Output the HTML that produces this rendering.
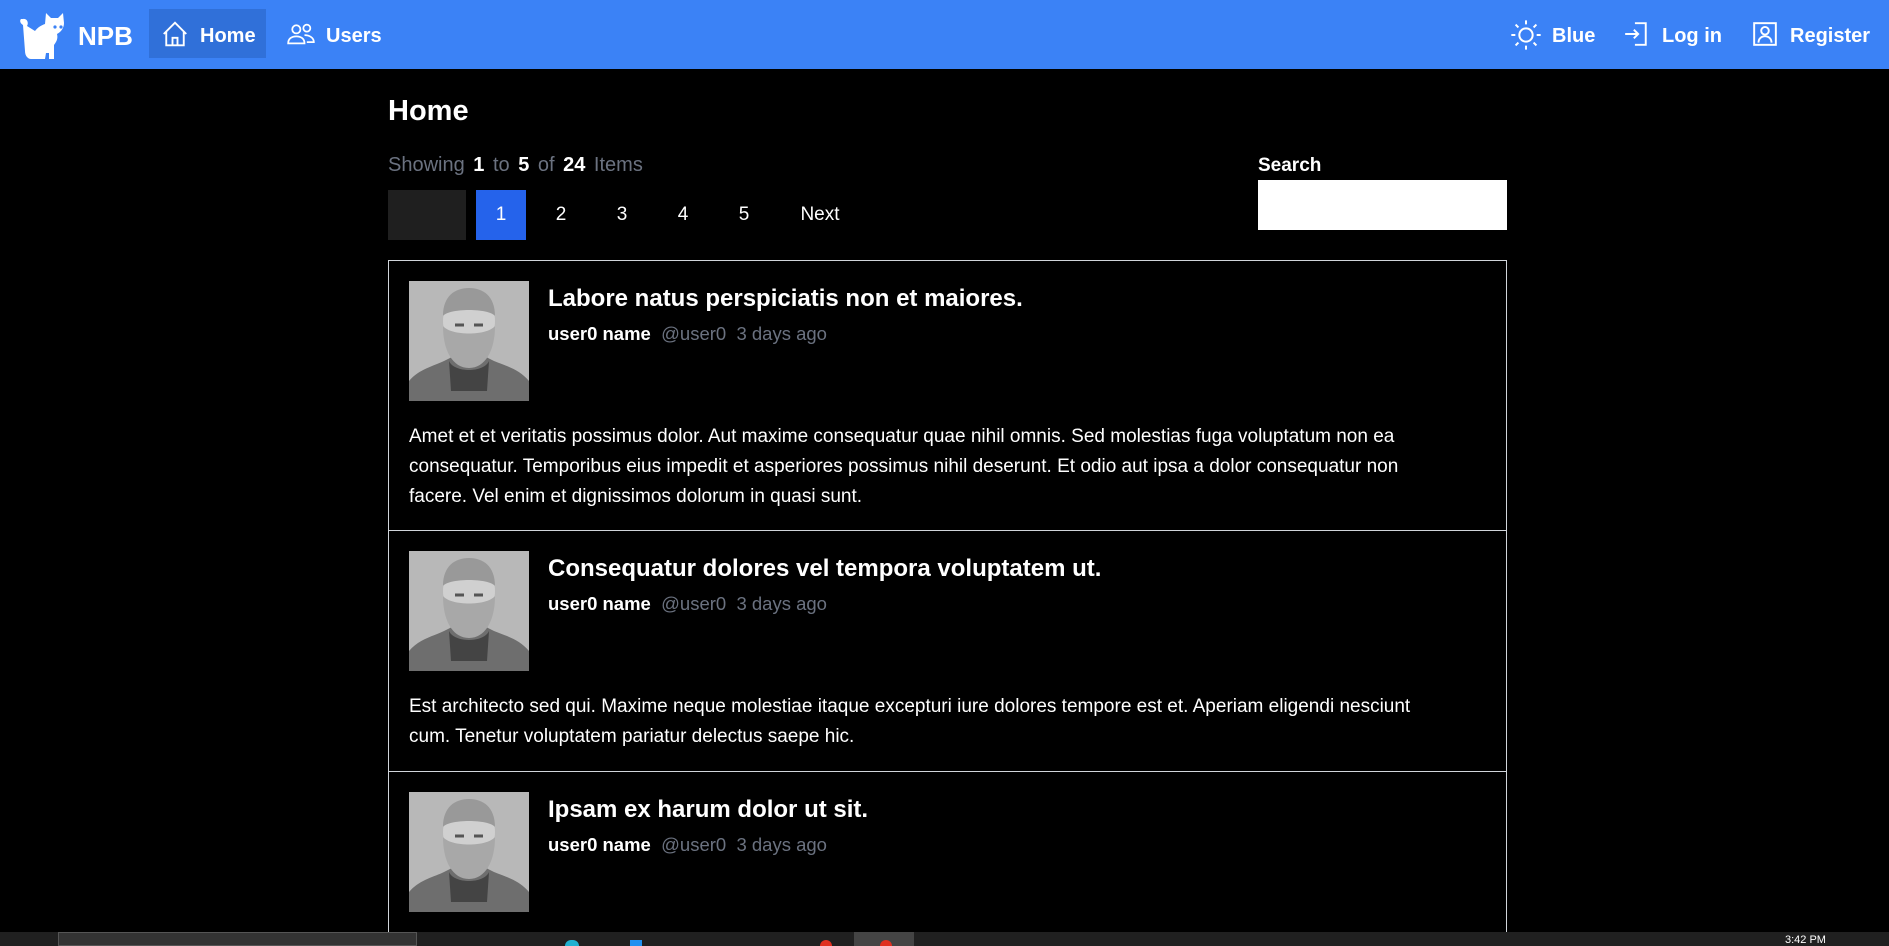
<!DOCTYPE html>
<html style="overflow:hidden;height:946px"><head><meta charset="utf-8"><style>
*{margin:0;padding:0;box-sizing:border-box}
body{width:1889px;height:946px;background:#000;color:#fff;font-family:"Liberation Sans",sans-serif;overflow:hidden;position:relative}
.nav{position:absolute;left:0;top:0;width:1889px;height:69px;background:#3b82f6}
.a{position:absolute;white-space:nowrap}
.nt{font-weight:bold;font-size:20px;top:25px}
.hl{position:absolute;left:149px;top:9px;width:117px;height:49px;background:#3070d9}
svg.i{position:absolute}
.gray{color:#6b7280}
.pg{position:absolute;top:190px;height:50px;font-size:19px;line-height:50px;text-align:center}
.card{position:absolute;left:388px;width:1119px;border:1px solid #d1d5db;border-bottom:none}
.av{position:absolute;left:20px;top:20px;width:120px;height:120px}
.tt{position:absolute;left:159px;top:24px;font-size:24px;font-weight:bold;white-space:nowrap}
.mt{position:absolute;left:159px;top:62px;font-size:18.5px;white-space:nowrap}
.bd{position:absolute;left:20px;top:161px;width:1045px;font-size:19px;line-height:30px}
</style></head><body>
<div class="nav">
<div class="hl"></div>
<svg class="i" style="left:17px;top:11px" width="52" height="50" viewBox="0 0 52 50"><path fill="#fff" d="M4 8c-2 2 0 5 2 6l2 26c0 5 3 8 6 8h14l1-6 3 0 0 6h5l0-14c3-4 4-7 3-11 4-2 7-6 7-11l-1-10-5 5h-7l-5-5-1 11c-3 1-7 3-10 7L10 15c2-3 0-8-4-7z"/><circle cx="38" cy="16" r="1.6" fill="#3b82f6"/><circle cx="44" cy="16" r="1.6" fill="#3b82f6"/></svg>
<div class="a" style="left:78px;top:21px;font-size:26px;font-weight:bold">NPB</div>
<svg class="i" style="left:160px;top:19px" width="30" height="30" viewBox="0 0 24 24" fill="none" stroke="#fff" stroke-width="1.5"><path d="M3 12 12 3l9 9M5 10v11h14V10M10 21v-6h4v6"/></svg>
<div class="a nt" style="left:200px">Home</div>
<svg class="i" style="left:286px;top:20px" width="30" height="28" viewBox="0 0 24 24" fill="none" stroke="#fff" stroke-width="1.5"><circle cx="8" cy="8" r="3.5"/><circle cx="17" cy="7" r="3"/><path d="M1 20c0-4 3-6 7-6s7 2 7 6zM15 13c4 0 8 2 8 6h-6"/></svg>
<div class="a nt" style="left:326px">Users</div>
<svg class="i" style="left:1510px;top:19px" width="32" height="32" viewBox="0 0 24 24" fill="none" stroke="#fff" stroke-width="1.5"><circle cx="12" cy="12" r="5"/><path d="M12 1v3M12 20v3M1 12h3M20 12h3M4.2 4.2l2.1 2.1M17.7 17.7l2.1 2.1M4.2 19.8l2.1-2.1M17.7 6.3l2.1-2.1"/></svg>
<div class="a nt" style="left:1552px">Blue</div>
<svg class="i" style="left:1623px;top:20px" width="26" height="28" viewBox="0 0 24 24" fill="none" stroke="#fff" stroke-width="1.8"><path d="M11 2h10v20H11M2 12h12M10 8l4 4-4 4"/></svg>
<div class="a nt" style="left:1662px">Log in</div>
<svg class="i" style="left:1752px;top:21px" width="26" height="26" viewBox="0 0 24 24" fill="none" stroke="#fff" stroke-width="1.8"><rect x="2" y="2" width="20" height="20"/><circle cx="12" cy="9" r="3.5"/><path d="M6 20c0-4 3-6 6-6s6 2 6 6"/></svg>
<div class="a nt" style="left:1790px">Register</div>
</div>

<div class="a" style="left:388px;top:95px;font-size:29px;font-weight:bold">Home</div>
<div class="a gray" style="left:388px;top:154px;font-size:20px;word-spacing:3px">Showing <b style="color:#fff">1</b> to <b style="color:#fff">5</b> of <b style="color:#fff">24</b> Items</div>
<div class="pg" style="left:388px;width:78px;background:#1f1f1f"></div>
<div class="pg" style="left:476px;width:50px;background:#2563eb">1</div>
<div class="pg" style="left:541px;width:40px">2</div>
<div class="pg" style="left:602px;width:40px">3</div>
<div class="pg" style="left:663px;width:40px">4</div>
<div class="pg" style="left:724px;width:40px">5</div>
<div class="pg" style="left:792px;width:56px">Next</div>
<div class="a" style="left:1258px;top:155px;font-size:19px;font-weight:bold">Search</div>
<div class="a" style="left:1258px;top:180px;width:249px;height:50px;background:#fff"></div>

<svg width="0" height="0" style="position:absolute"><defs><symbol id="bust" viewBox="0 0 120 120"><rect width="120" height="120" fill="#b8b8b8"/><path d="M0 120V100c10-12 25-15 35-20l10-5h30l10 5c12 5 25 8 35 20v20z" fill="#6e6e6e"/><path d="M40 80c5 12 35 12 40 0l-2 30H42z" fill="#444"/><ellipse cx="60" cy="40" rx="26" ry="30" fill="#d0d0d0"/><path d="M34 45c0 25 10 42 26 42s26-17 26-42c-8 10-44 10-52 0z" fill="#a8a8a8"/><path d="M34 35c0-20 12-28 26-28s26 8 26 28c-6-8-46-8-52 0z" fill="#999"/><path d="M46 44h9M65 44h9" stroke="#555" stroke-width="3"/></symbol></defs></svg>

<div class="card" style="top:260px;height:271px">
<svg class="av"><use href="#bust"/></svg>
<div class="tt">Labore natus perspiciatis non et maiores.</div>
<div class="mt"><b>user0 name</b> &nbsp;<span class="gray">@user0 &nbsp;3 days ago</span></div>
<div class="bd">Amet et et veritatis possimus dolor. Aut maxime consequatur quae nihil omnis. Sed molestias fuga voluptatum non ea consequatur. Temporibus eius impedit et asperiores possimus nihil deserunt. Et odio aut ipsa a dolor consequatur non facere. Vel enim et dignissimos dolorum in quasi sunt.</div>
</div>
<div class="card" style="top:530px;height:242px">
<svg class="av"><use href="#bust"/></svg>
<div class="tt">Consequatur dolores vel tempora voluptatem ut.</div>
<div class="mt"><b>user0 name</b> &nbsp;<span class="gray">@user0 &nbsp;3 days ago</span></div>
<div class="bd">Est architecto sed qui. Maxime neque molestiae itaque excepturi iure dolores tempore est et. Aperiam eligendi nesciunt cum. Tenetur voluptatem pariatur delectus saepe hic.</div>
</div>
<div class="card" style="top:771px;height:175px">
<svg class="av"><use href="#bust"/></svg>
<div class="tt">Ipsam ex harum dolor ut sit.</div>
<div class="mt"><b>user0 name</b> &nbsp;<span class="gray">@user0 &nbsp;3 days ago</span></div>
</div>

<div class="a" style="left:0;top:932px;width:1889px;height:14px;background:#202020"></div>
<div class="a" style="left:58px;top:932px;width:359px;height:14px;background:#333;border:1px solid #555"></div>
<div class="a" style="left:854px;top:932px;width:60px;height:14px;background:#444"></div>
<div class="a" style="left:820px;top:940px;width:12px;height:6px;background:#e03020;border-radius:6px 6px 0 0"></div>
<div class="a" style="left:880px;top:940px;width:12px;height:6px;background:#e03020;border-radius:6px 6px 0 0"></div>
<div class="a" style="left:565px;top:940px;width:14px;height:6px;background:#20b0d0;border-radius:6px 6px 0 0"></div>
<div class="a" style="left:630px;top:940px;width:12px;height:6px;background:#2090f0"></div>
<div class="a" style="left:1785px;top:934px;font-size:11px;color:#fff">3:42 PM</div>
</body></html>
